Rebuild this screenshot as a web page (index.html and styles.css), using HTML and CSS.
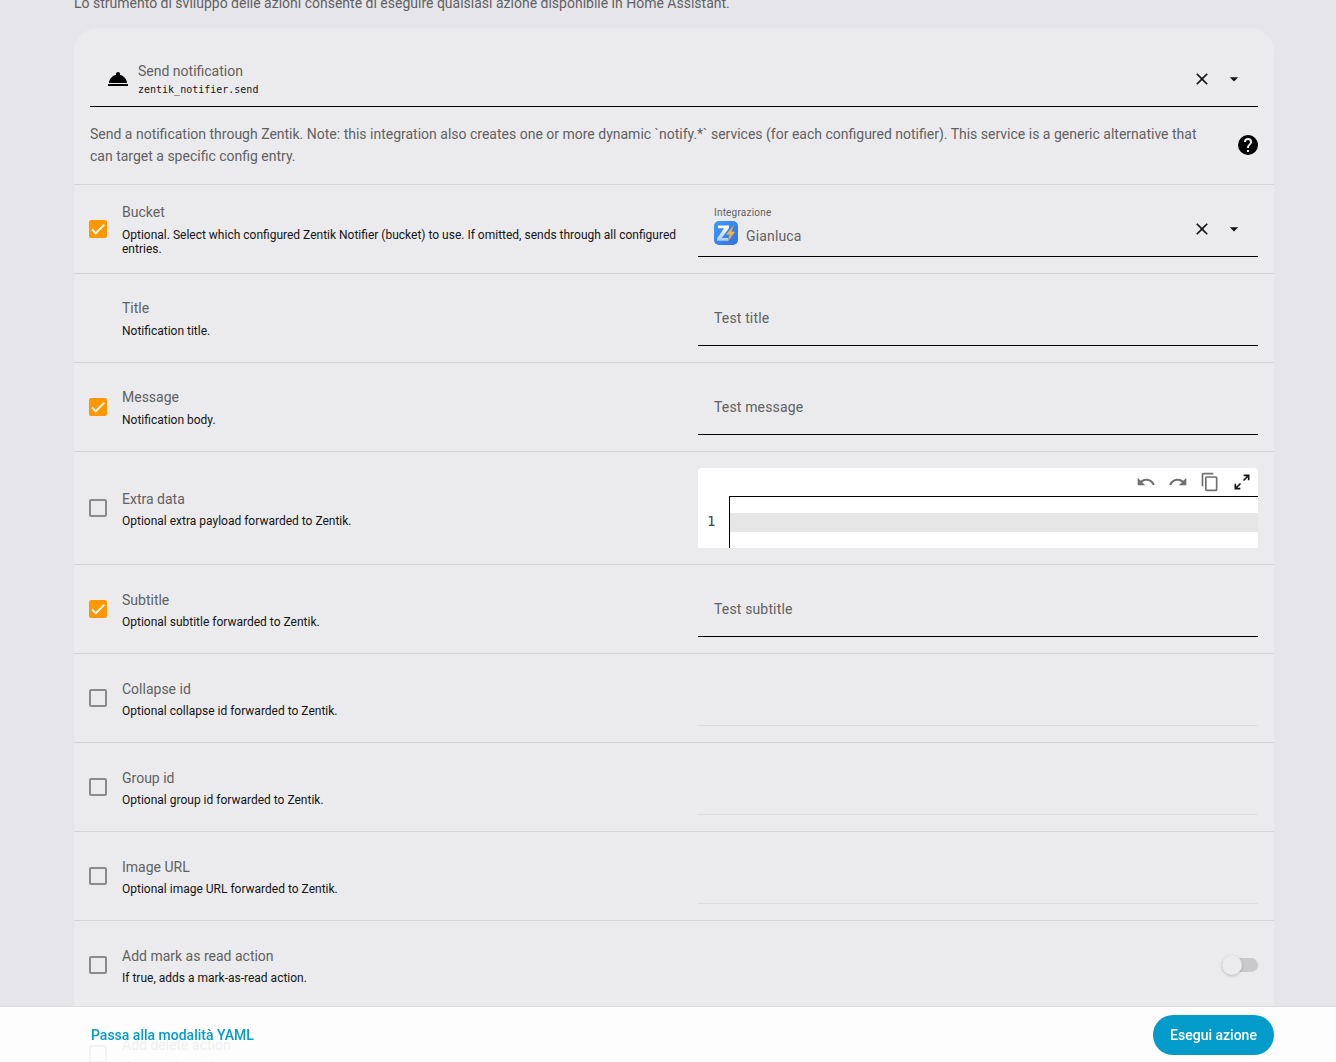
FILE: index.html
```html
<!DOCTYPE html>
<html lang="it">
<head>
<meta charset="utf-8">
<title>Azioni</title>
<link rel="stylesheet" href="styles.css">
</head>
<body>
<main class="page">
  <p class="intro">Lo strumento di sviluppo delle azioni consente di eseguire qualsiasi azione disponibile in Home Assistant.</p>
  <section class="card">
    <div class="picker">
      <svg class="picker-icon" viewBox="0 0 24 24"><path d="M2 17h20v2H2zM13.84 7.79A2 2 0 0 0 14 7a2 2 0 0 0-4 0c0 .28.06.55.16.79C6.25 8.6 3.27 11.93 3 16h18c-.27-4.07-3.25-7.4-7.16-8.21z"/></svg>
      <div class="picker-text">
        <div class="picker-name">Send notification</div>
        <div class="picker-id">zentik_notifier.send</div>
      </div>
      <svg class="icon-clear" viewBox="0 0 24 24"><path d="M19 6.41 17.59 5 12 10.59 6.41 5 5 6.41 10.59 12 5 17.59 6.41 19 12 13.41 17.59 19 19 17.59 13.41 12z"/></svg>
      <svg class="icon-caret" viewBox="0 0 24 24"><path d="M7 10l5 5 5-5z"/></svg>
    </div>
    <div class="description">
      <p>Send a notification through Zentik. Note: this integration also creates one or more dynamic `notify.*` services (for each configured notifier). This service is a generic alternative that can target a specific config entry.</p>
      <svg class="help" viewBox="0 0 24 24"><path d="M15.07 11.25l-.9.92C13.45 12.89 13 13.5 13 15h-2v-.5c0-1.11.45-2.11 1.17-2.83l1.24-1.26c.37-.36.59-.86.59-1.41a2 2 0 0 0-2-2 2 2 0 0 0-2 2H8a4 4 0 0 1 4-4 4 4 0 0 1 4 4c0 .88-.36 1.67-.93 2.25zM13 19h-2v-2h2zM12 2A10 10 0 0 0 2 12a10 10 0 0 0 10 10 10 10 0 0 0 10-10c0-5.53-4.5-10-10-10z"/></svg>
    </div>

    <div class="row row-up">
      <span class="check on"><svg viewBox="0 0 24 24"><path d="M9 16.17 4.83 12l-1.42 1.41L9 19 21 7l-1.41-1.41z"/></svg></span>
      <div class="info">
        <div class="label">Bucket</div>
        <div class="hint">Optional. Select which configured Zentik Notifier (bucket) to use. If omitted, sends through all configured entries.</div>
      </div>
      <div class="field select">
        <div class="select-body">
          <div class="select-label">Integrazione</div>
          <div class="select-value">
            <svg class="logo" viewBox="0 0 24 24">
              <defs>
                <linearGradient id="lg" x1="0" y1="0" x2="1" y2="1"><stop offset="0" stop-color="#3f9bf5"/><stop offset="1" stop-color="#2f6fe4"/></linearGradient>
                <linearGradient id="lz" x1="0" y1="0" x2="0" y2="1"><stop offset="0" stop-color="#ffffff"/><stop offset="1" stop-color="#a9cdf6"/></linearGradient>
              </defs>
              <rect width="24" height="24" rx="5" fill="url(#lg)"/>
              <path d="M4 4.5h11v2.4L7.8 17H14v2.8H3v-2.4L10 7.2H4z" fill="url(#lz)"/>
              <path d="M20.5 3.5 12 13.4h3.6L13.5 21 21 10.8h-3.7z" fill="#f3b33c"/>
            </svg>
            <span>Gianluca</span>
          </div>
        </div>
        <svg class="icon-clear" viewBox="0 0 24 24"><path d="M19 6.41 17.59 5 12 10.59 6.41 5 5 6.41 10.59 12 5 17.59 6.41 19 12 13.41 17.59 19 19 17.59 13.41 12z"/></svg>
        <svg class="icon-caret" viewBox="0 0 24 24"><path d="M7 10l5 5 5-5z"/></svg>
      </div>
    </div>

    <div class="row row-up">
      <span class="check none"></span>
      <div class="info"><div class="label">Title</div><div class="hint">Notification title.</div></div>
      <div class="field text">Test title</div>
    </div>

    <div class="row row-up">
      <span class="check on"><svg viewBox="0 0 24 24"><path d="M9 16.17 4.83 12l-1.42 1.41L9 19 21 7l-1.41-1.41z"/></svg></span>
      <div class="info"><div class="label">Message</div><div class="hint">Notification body.</div></div>
      <div class="field text">Test message</div>
    </div>

    <div class="row row-tall">
      <span class="check"></span>
      <div class="info"><div class="label">Extra data</div><div class="hint">Optional extra payload forwarded to Zentik.</div></div>
      <div class="field editor">
        <div class="toolbar">
          <svg viewBox="0 0 24 24"><path d="M12.5 8c-2.65 0-5.05.99-6.9 2.6L2 7v9h9l-3.62-3.62c1.39-1.16 3.16-1.88 5.12-1.88 3.54 0 6.55 2.31 7.6 5.5l2.37-.78C21.08 11.03 17.15 8 12.5 8z"/></svg>
          <svg viewBox="0 0 24 24"><path d="M18.4 10.6C16.55 8.99 14.15 8 11.5 8c-4.65 0-8.58 3.03-9.96 7.22L3.9 16c1.05-3.19 4.05-5.5 7.6-5.5 1.95 0 3.73.72 5.12 1.88L13 16h9V7z"/></svg>
          <svg viewBox="0 0 24 24"><path d="M19 21H8V7h11m0-2H8a2 2 0 0 0-2 2v14a2 2 0 0 0 2 2h11a2 2 0 0 0 2-2V7a2 2 0 0 0-2-2m-3-4H4a2 2 0 0 0-2 2v14h2V3h12z"/></svg>
          <svg class="dark" viewBox="0 0 24 24"><path d="M10 21v-2H6.41l4.5-4.5-1.41-1.41-4.5 4.5V14H3v7zM14.5 10.91l4.5-4.5V10h2V3h-7v2h3.59l-4.5 4.5z"/></svg>
        </div>
        <div class="code">
          <div class="gutter">1</div>
          <div class="lines"><div class="active-line"></div></div>
        </div>
      </div>
    </div>

    <div class="row">
      <span class="check on"><svg viewBox="0 0 24 24"><path d="M9 16.17 4.83 12l-1.42 1.41L9 19 21 7l-1.41-1.41z"/></svg></span>
      <div class="info"><div class="label">Subtitle</div><div class="hint">Optional subtitle forwarded to Zentik.</div></div>
      <div class="field text">Test subtitle</div>
    </div>

    <div class="row">
      <span class="check"></span>
      <div class="info"><div class="label">Collapse id</div><div class="hint">Optional collapse id forwarded to Zentik.</div></div>
      <div class="field text disabled"></div>
    </div>

    <div class="row">
      <span class="check"></span>
      <div class="info"><div class="label">Group id</div><div class="hint">Optional group id forwarded to Zentik.</div></div>
      <div class="field text disabled"></div>
    </div>

    <div class="row">
      <span class="check"></span>
      <div class="info"><div class="label">Image URL</div><div class="hint">Optional image URL forwarded to Zentik.</div></div>
      <div class="field text disabled"></div>
    </div>

    <div class="row">
      <span class="check"></span>
      <div class="info"><div class="label">Add mark as read action</div><div class="hint">If true, adds a mark-as-read action.</div></div>
      <div class="field toggle-wrap"><span class="toggle"><span class="knob"></span></span></div>
    </div>

    <div class="row">
      <span class="check"></span>
      <div class="info"><div class="label">Add delete action</div><div class="hint">If true, adds a delete action.</div></div>
      <div class="field toggle-wrap"></div>
    </div>
  </section>
</main>
<footer class="bar">
  <a class="yaml">Passa alla modalità YAML</a>
  <button class="run">Esegui azione</button>
</footer>
</body>
</html>
```
FILE: styles.css
```css
* { box-sizing: border-box; }
html, body { margin: 0; height: 100%; overflow: hidden; }
body {
  background: #e5e5ea;
  font-family: Roboto, "Liberation Sans", sans-serif;
  color: #141414;
}
.page { padding: 0 62px 0 74px; margin-top: -7px; }
.intro {
  margin: 0 0 22px;
  font-size: 14px;
  line-height: 20px;
  height: 13px;
  color: #616161;
  white-space: nowrap;
}
.card {
  background: #ebebee;
  border-radius: 24px 24px 0 0;
  padding-top: 12px;
  margin-top: 22px;
}
.picker {
  margin: 0 16px;
  height: 67px;
  border-bottom: 1px solid #000;
  display: flex;
  align-items: center;
  padding: 12px 14px 0 16px;
}
.picker-icon { width: 24px; height: 24px; flex: none; }
.picker-text { flex: 1; margin-left: 8px; }
.picker-name { font-size: 14px; line-height: 20px; color: #616161; }
.picker-id { font-family: "DejaVu Sans Mono", monospace; font-size: 10px; line-height: 16px; color: #141414; margin-top: 1px; }
.icon-clear { width: 20px; height: 20px; flex: none; fill: #141414; margin-right: 12px; }
.icon-caret { width: 20px; height: 20px; flex: none; fill: #141414; }
.description {
  display: flex;
  align-items: center;
  gap: 20px;
  margin: 0 16px;
  height: 77px;
  padding-bottom: 2px;
}
.description p {
  margin: 0;
  flex: 1;
  font-size: 14px;
  line-height: 22px;
  color: #616161;
}
.help { width: 24px; height: 24px; flex: none; margin-right: -2px; }
.row {
  height: 89px;
  border-top: 1px solid #d4d4d6;
  display: flex;
  align-items: center;
  padding: 0 16px;
}
.row-tall { height: 113px; }
.check {
  flex: none;
  width: 18px;
  height: 18px;
  margin-left: -1px;
  margin-right: 15px;
  border: 2px solid #8a8a8c;
  border-radius: 2px;
  display: flex;
  align-items: center;
  justify-content: center;
}
.check.on { background: #ff9800; border-color: #ff9800; }
.check.on svg { width: 18px; height: 18px; fill: #fff; stroke: #fff; stroke-width: .7; flex: none; }
.check.none { visibility: hidden; }
.info { width: 576px; flex: none; padding-right: 6px; }
.label { font-size: 14px; line-height: 20px; color: #616161; }
.hint { font-size: 12px; line-height: 14px; color: #141414; margin-top: 5px; }
.row-up .label { margin-top: -1px; }
.row-up .hint { margin-top: 6px; }
.field { width: 560px; flex: none; }
.text {
  height: 56px;
  padding: 0 16px;
  display: flex;
  align-items: center;
  font-size: 14px;
  letter-spacing: .15px;
  color: #616161;
  border-bottom: 1px solid #000;
}
.text.disabled { border-bottom-color: #dcdcde; }
.select {
  height: 56px;
  display: flex;
  align-items: center;
  padding: 0 14px 0 16px;
  border-bottom: 1px solid #000;
}
.select-body { flex: 1; align-self: flex-start; padding-top: 6px; }
.select-label { font-size: 10px; line-height: 12px; color: #616161; letter-spacing: .2px; }
.select-value { display: flex; align-items: center; gap: 8px; font-size: 14px; letter-spacing: .15px; color: #616161; height: 24px; margin-top: 5px; }
.logo { width: 24px; height: 24px; flex: none; margin-top: -6px; }
.editor { background: #fff; height: 80px; border-radius: 4px 4px 0 0; overflow: hidden; }
.toolbar {
  height: 29px;
  border-bottom: 1px solid #000;
  display: flex;
  justify-content: flex-end;
  align-items: center;
  gap: 12px;
  padding: 0 6px 1px 0;
  margin-left: 31px;
}
.toolbar svg { width: 20px; height: 20px; fill: #6f6f6f; flex: none; }
.toolbar svg.dark { fill: #141414; }
.code { display: flex; height: 51px; }
.gutter {
  width: 32px;
  border-right: 1px solid #000;
  font-family: "DejaVu Sans Mono", monospace;
  font-size: 14px;
  line-height: 49px;
  color: #444;
  padding-left: 9px;
  flex: none;
}
.lines { flex: 1; padding-top: 16px; }
.active-line { height: 19px; background: #e6e6e6; }
.toggle-wrap { display: flex; justify-content: flex-end; }
.toggle { position: relative; width: 36px; height: 14px; border-radius: 7px; background: #c9c9cb; display: block; }
.knob {
  position: absolute;
  left: 0;
  top: -3px;
  width: 20px;
  height: 20px;
  border-radius: 50%;
  background: #ebebee;
  box-shadow: 0 1px 3px rgba(0,0,0,.22);
}
.bar {
  position: fixed;
  left: 0;
  right: 0;
  bottom: 0;
  height: 56px;
  background: rgba(255,255,255,.9);
  border-top: 1px solid #dcdcdf;
  display: flex;
  align-items: center;
  justify-content: space-between;
  padding: 0 62px 0 91px;
}
.yaml { font-size: 14px; font-weight: 500; color: #039bc9; }
.run {
  width: 121px;
  height: 40px;
  border: 0;
  border-radius: 20px;
  background: #039bc9;
  color: #fff;
  font: 500 14px Roboto, "Liberation Sans", sans-serif;
}
```
